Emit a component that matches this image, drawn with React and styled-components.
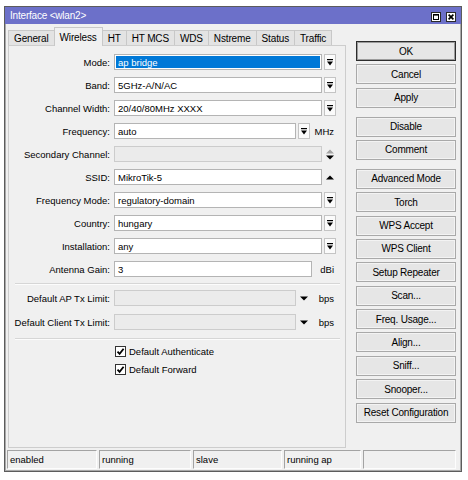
import React from 'react';
import styled, { createGlobalStyle } from 'styled-components';

const Global = createGlobalStyle`
  html, body { margin: 0; padding: 0; background: #fff; }
  body {
    font-family: "Liberation Sans", Arial, sans-serif;
    font-size: 9.5px;
    color: #000;
  }
  * { box-sizing: border-box; }
`;

const Page = styled.div`
  padding: 6px 0 0 4px;
`;

const Window = styled.div`
  width: 458px;
  border: 1px solid #5c5c5c;
  box-shadow: inset 0 0 0 1px #a9a9a9;
  background: #f0f0f0;
  display: flex;
  flex-direction: column;
  padding-bottom: 2px;
`;

const TitleBar = styled.div`
  height: 17px;
  background: #6c70c9;
  display: flex;
  align-items: center;
  padding: 0 5px 0 5px;
  color: #fff;
  font-size: 10px;
  letter-spacing: -0.2px;
`;

const TitleText = styled.div`
  flex: 1;
`;

const TitleButtons = styled.div`
  display: flex;
  gap: 5px;
  margin-top: 2px;
`;

const TitleBtn = styled.div`
  width: 10px;
  height: 10px;
  display: flex;
`;

const Main = styled.div`
  height: 424px;
  display: flex;
  padding-left: 3px;
`;

const LeftCol = styled.div`
  width: 338px;
  display: flex;
  flex-direction: column;
`;

const TabStrip = styled.div`
  height: 21px;
  display: flex;
  align-items: flex-end;
  position: relative;
  z-index: 1;
`;

const Tab = styled.div`
  height: ${p => (p.$active ? 19 : 15)}px;
  margin-bottom: ${p => (p.$active ? -1 : 0)}px;
  margin-left: ${p => (p.$first ? 0 : -1)}px;
  padding: 0 5px;
  border: 1px solid #c8c8c8;
  border-bottom: none;
  background: ${p => (p.$active ? '#f0f0f0' : '#e3e3e3')};
  display: flex;
  align-items: center;
  white-space: nowrap;
  font-size: 10px;
  letter-spacing: -0.15px;
`;

const Panel = styled.div`
  flex: 1;
  border: 1px solid #cdcdcd;
  background: #f0f0f0;
  padding-top: 8px;
  display: flex;
  flex-direction: column;
`;

const Row = styled.div`
  display: grid;
  grid-template-columns: 101px 222px;
  column-gap: 4px;
  align-items: center;
  height: 16px;
  margin-top: ${p => p.$mt}px;
`;

const Label = styled.div`
  text-align: right;
  white-space: nowrap;
`;

const Field = styled.div`
  display: flex;
  height: 16px;
`;

const Input = styled.div`
  flex: 1;
  min-width: 0;
  border: 1px solid #b4b4b4;
  background: ${p => (p.$disabled ? '#ebebeb' : '#fff')};
  border-color: ${p => (p.$disabled ? '#cccccc' : '#b4b4b4')};
  display: flex;
  align-items: center;
  padding-left: ${p => (p.$selected ? 1 : 3)}px;
  white-space: nowrap;
  overflow: hidden;
`;

const Selection = styled.div`
  flex: 1;
  align-self: stretch;
  margin: 1px 1px 1px 0;
  padding-left: 2px;
  background: #0078d7;
  color: #fff;
  display: flex;
  align-items: center;
`;

const DropBtn = styled.div`
  width: 12px;
  margin-left: 2px;
  border: ${p => (p.$plain ? 'none' : '1px solid #c4c4c4')};
  background: ${p => (p.$plain ? 'transparent' : '#fbfbfb')};
  display: flex;
  align-items: center;
  justify-content: center;
`;

const Unit = styled.div`
  width: ${p => p.$w}px;
  padding-right: 2px;
  display: flex;
  align-items: center;
  justify-content: flex-end;
`;

const Separator = styled.div`
  height: 2px;
  border-top: 1px solid #d6d6d6;
  border-bottom: 1px solid #fcfcfc;
  margin: ${p => p.$mt}px 5px 0 6px;
`;

const CheckRow = styled.div`
  display: flex;
  align-items: center;
  height: 18px;
  padding-left: 106px;
  gap: 3px;
  margin-top: ${p => p.$mt || 0}px;
`;

const CheckBox = styled.div`
  width: 11px;
  height: 11px;
  border: 1px solid #333;
  background: #fff;
  display: flex;
  align-items: center;
  justify-content: center;
`;

const ButtonCol = styled.div`
  width: 100px;
  margin-left: 10px;
  padding-top: 17px;
  display: flex;
  flex-direction: column;
  gap: 3.4px;
`;

const Btn = styled.button`
  height: 20px;
  flex: none;
  margin: ${p => (p.$group ? 5.4 : 0)}px 0 0 0;
  padding: 0;
  border: 1px solid ${p => (p.$default ? '#2c2c2c' : '#a9a9a9')};
  box-shadow: inset 0 0 0 1px ${p => (p.$default ? '#9c9c9c' : '#f3f3f3')};
  background: #e6e6e6;
  font: inherit;
  font-size: 10px;
  letter-spacing: -0.2px;
  color: #000;
  white-space: nowrap;
`;

const StatusBar = styled.div`
  display: grid;
  grid-template-columns: 90px 92px 89px 77px 93px;
  column-gap: 2px;
  height: 19px;
  margin: 2px 0 0 2px;
`;

const StatusCell = styled.div`
  border-top: 1px solid #a3a3a3;
  border-left: 1px solid #a3a3a3;
  border-right: 1px solid #fdfdfd;
  border-bottom: 1px solid #fdfdfd;
  padding-left: 2px;
  display: flex;
  align-items: center;
  white-space: nowrap;
`;

const MaxIcon = () => (
  <svg width="10" height="10" viewBox="0 0 10 10">
    <rect x="0.5" y="0.5" width="9" height="9" fill="#fff" stroke="#2b2b2b" />
    <rect x="2.5" y="2.5" width="5" height="5" fill="none" stroke="#000" />
    <rect x="2" y="2" width="6" height="1.6" fill="#000" />
  </svg>
);

const CloseIcon = () => (
  <svg width="10" height="10" viewBox="0 0 10 10">
    <rect x="0.5" y="0.5" width="9" height="9" fill="#fff" stroke="#2b2b2b" />
    <path d="M2.6 2.6 L7.4 7.4 M7.4 2.6 L2.6 7.4" stroke="#000" strokeWidth="1.7" />
  </svg>
);

const DropIcon = () => (
  <svg width="6" height="7" viewBox="0 0 6 7">
    <rect x="0" y="0" width="6" height="1.2" fill="#000" />
    <path d="M0 2.4 H6 L3 6.6 Z" fill="#000" />
  </svg>
);

const UpDownIcon = () => (
  <svg width="8" height="11" viewBox="0 0 8 11">
    <path d="M0 4.5 L4 0.5 L8 4.5 Z" fill="#a3a3a3" />
    <path d="M0 6.5 H8 L4 10.5 Z" fill="#000" />
  </svg>
);

const UpIcon = () => (
  <svg width="8" height="5" viewBox="0 0 8 5">
    <path d="M0 4.5 L4 0.5 L8 4.5 Z" fill="#000" />
  </svg>
);

const DownIcon = () => (
  <svg width="8" height="5" viewBox="0 0 8 5">
    <path d="M0 0.5 H8 L4 4.5 Z" fill="#000" />
  </svg>
);

const CheckIcon = () => (
  <svg width="9" height="9" viewBox="0 0 9 9">
    <path d="M1.5 4.6 L3.6 6.8 L7.6 1.8" fill="none" stroke="#000" strokeWidth="1.8" />
  </svg>
);

const tabs = ['General', 'Wireless', 'HT', 'HT MCS', 'WDS', 'Nstreme', 'Status', 'Traffic'];

const buttons = [
  { t: 'OK', d: true },
  { t: 'Cancel' },
  { t: 'Apply' },
  { t: 'Disable', g: true },
  { t: 'Comment' },
  { t: 'Advanced Mode', g: true },
  { t: 'Torch' },
  { t: 'WPS Accept' },
  { t: 'WPS Client' },
  { t: 'Setup Repeater' },
  { t: 'Scan...' },
  { t: 'Freq. Usage...' },
  { t: 'Align...' },
  { t: 'Sniff...' },
  { t: 'Snooper...' },
  { t: 'Reset Configuration' },
];

const FormRow = ({ label, value, mt = 7, kind = 'drop', unit, unitW, disabled, selected }) => (
  <Row $mt={mt}>
    <Label>{label}</Label>
    <Field>
      <Input $disabled={disabled} $selected={selected}>
        {selected ? <Selection>{value}</Selection> : value}
      </Input>
      {kind === 'drop' && (
        <DropBtn>
          <DropIcon />
        </DropBtn>
      )}
      {kind === 'updown' && (
        <DropBtn $plain>
          <UpDownIcon />
        </DropBtn>
      )}
      {kind === 'up' && (
        <DropBtn $plain>
          <UpIcon />
        </DropBtn>
      )}
      {kind === 'down' && (
        <DropBtn $plain>
          <DownIcon />
        </DropBtn>
      )}
      {unit && <Unit $w={unitW}>{unit}</Unit>}
    </Field>
  </Row>
);

export default function App() {
  return (
    <>
      <Global />
      <Page>
        <Window>
          <TitleBar>
            <TitleText>Interface &lt;wlan2&gt;</TitleText>
            <TitleButtons>
              <TitleBtn>
                <MaxIcon />
              </TitleBtn>
              <TitleBtn>
                <CloseIcon />
              </TitleBtn>
            </TitleButtons>
          </TitleBar>
          <Main>
            <LeftCol>
              <TabStrip>
                {tabs.map((t, i) => (
                  <Tab key={t} $first={i === 0} $active={t === 'Wireless'}>
                    {t}
                  </Tab>
                ))}
              </TabStrip>
              <Panel>
                <FormRow label="Mode:" value="ap bridge" mt={0} selected />
                <FormRow label="Band:" value="5GHz-A/N/AC" />
                <FormRow label="Channel Width:" value="20/40/80MHz XXXX" />
                <FormRow label="Frequency:" value="auto" unit="MHz" unitW={26} />
                <FormRow label="Secondary Channel:" value="" kind="updown" disabled />
                <FormRow label="SSID:" value="MikroTik-5" kind="up" />
                <FormRow label="Frequency Mode:" value="regulatory-domain" />
                <FormRow label="Country:" value="hungary" />
                <FormRow label="Installation:" value="any" />
                <FormRow label="Antenna Gain:" value="3" kind="none" unit="dBi" unitW={24} />
                <Separator $mt={6} />
                <FormRow label="Default AP Tx Limit:" value="" mt={5} kind="down" unit="bps" unitW={26} disabled />
                <FormRow label="Default Client Tx Limit:" value="" mt={8} kind="down" unit="bps" unitW={26} disabled />
                <Separator $mt={8} />
                <CheckRow $mt={2.5}>
                  <CheckBox>
                    <CheckIcon />
                  </CheckBox>
                  Default Authenticate
                </CheckRow>
                <CheckRow>
                  <CheckBox>
                    <CheckIcon />
                  </CheckBox>
                  Default Forward
                </CheckRow>
              </Panel>
            </LeftCol>
            <ButtonCol>
              {buttons.map(b => (
                <Btn key={b.t} $default={b.d} $group={b.g}>
                  {b.t}
                </Btn>
              ))}
            </ButtonCol>
          </Main>
          <StatusBar>
            <StatusCell>enabled</StatusCell>
            <StatusCell>running</StatusCell>
            <StatusCell>slave</StatusCell>
            <StatusCell>running ap</StatusCell>
            <StatusCell />
          </StatusBar>
        </Window>
      </Page>
    </>
  );
}
